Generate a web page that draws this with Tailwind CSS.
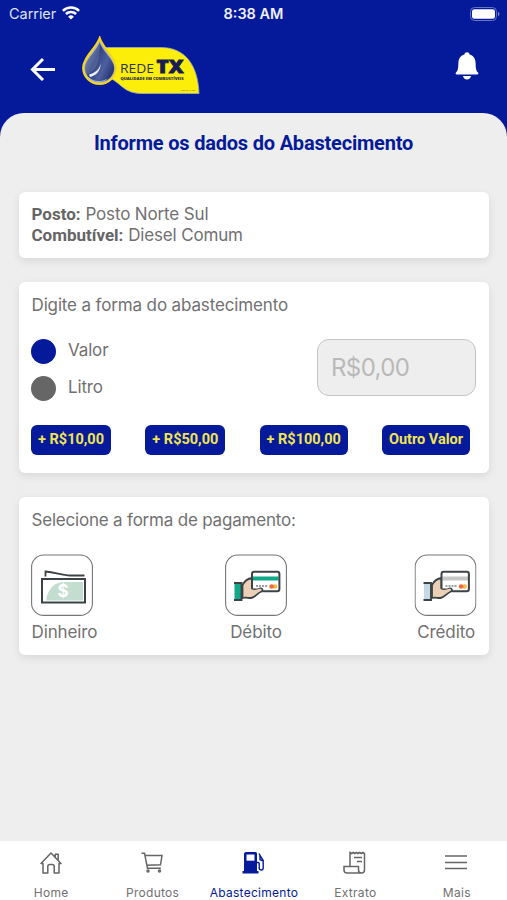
<!DOCTYPE html>
<html lang="pt-BR">
<head>
<meta charset="utf-8">
<meta name="viewport" content="width=device-width, initial-scale=1">
<title>Abastecimento</title>
<script src="https://cdn.jsdelivr.net/npm/@tailwindcss/browser@4"></script>
</head>
<body class="h-[900px] overflow-hidden bg-[#051a9b] font-['Inter',sans-serif] text-[#717171]">
<div class="flex h-[900px] w-[507px] flex-col">
  <header class="h-[113px] shrink-0 text-white">
    <div class="grid h-7 grid-cols-3 items-center pl-[9px] pr-[7px]">
      <div class="flex items-center gap-[6px] text-[14.5px] tracking-[-0.05px] text-[#dfe3f5]"><span>Carrier</span>
        <svg class="h-[14px] w-[18px] -translate-y-px" viewBox="0 0 18 14" fill="none" stroke="#fff" stroke-width="2.5"><path d="M.9 4.9a11.5 11.5 0 0 1 16.2 0M3.9 8a7.2 7.2 0 0 1 10.2 0"/><path d="M9 13.6 6.1 10.700a4.100 4.100 0 0 1 5.800 0Z" fill="#fff" stroke="none"/></svg>
      </div>
      <div class="-ml-[2px] text-center text-[14.5px] font-semibold text-[#eef0fa]">8:38 AM</div>
      <svg class="h-[14px] w-[30px] justify-self-end" viewBox="0 0 30 14"><rect x=".5" y=".5" width="26" height="13" rx="4" fill="none" stroke="#6673c4"/><rect x="2" y="2.200" width="23" height="9.600" rx="2.300" fill="#fff"/><path d="M28 4.800c2 .8 2 3.600 0 4.400Z" fill="#7e8bd0"/></svg>
    </div>
    <div class="flex items-start pl-[30px] pt-2">
      <svg class="mt-[21px] h-[24px] w-[26px]" viewBox="0 0 26 24" fill="none" stroke="#fff" stroke-width="3"><path d="M25 12.500H3M13 2 2.500 12.500 13 23"/></svg>
      <svg class="ml-[25px] h-[60px] w-[120px]" viewBox="0 0 120 60">
        <defs><linearGradient id="drop" x1="0" y1="0" x2="1" y2=".6"><stop offset="0" stop-color="#8c9bc4"/><stop offset=".45" stop-color="#33457f"/><stop offset=".75" stop-color="#4c60a0"/><stop offset="1" stop-color="#2b3a78"/></linearGradient></defs>
        <path d="M18 11.500H80C104 11.500 117 29 118 57.500H61C43 57.500 41 48 29 42Z" fill="#fdee0a" stroke="#9dacbd" stroke-width=".8"/>
        <g transform="translate(1 .5)">
          <path d="M17.700 1.500C14 12 1.200 21 1.200 31.500a16.300 15.800 0 0 0 32.600 0C33.800 21 21 12 17.700 1.500Z" fill="#aab4cc" stroke="#f3d51e" stroke-width="2.200"/>
          <path d="M17.700 6C14.500 15 3 23 3 31.500a14.600 14 0 0 0 29.200 0C32.200 23 20.500 15 17.700 6Z" fill="url(#drop)"/>
          <path d="M17.700 6C14.500 15 3 23 3 31.500c0 3 .6 4.500 1.800 6.500C12 36 18.500 28 17.700 6Z" fill="#8394c0" opacity=".3"/>
          <path d="M18.500 26.500c-.5 6-4.500 9.500-11.500 11.500l1 2.500C14.500 39 19 34 18.500 26.500Z" fill="#edf1f7"/>
          <path d="M6.500 41c4.500 4.500 12 5.500 18 2" fill="none" stroke="#c2cadc" stroke-width=".8"/>
        </g>
        <text x="39" y="37" textLength="34" lengthAdjust="spacingAndGlyphs" font-family="Open Sans, sans-serif" font-size="13" fill="#2e3356">REDE</text>
        <text x="75.500" y="37" textLength="27" lengthAdjust="spacingAndGlyphs" font-family="Open Sans, sans-serif" font-size="18" font-weight="800" fill="#171c52" stroke="#171c52" stroke-width=".8">TX</text>
        <text x="39.500" y="43.800" textLength="63" lengthAdjust="spacingAndGlyphs" font-family="Open Sans, sans-serif" font-size="3.200" font-weight="800" fill="#292c4c">QUALIDADE EM COMBUSTÍVEIS</text>
        <text x="100" y="55" textLength="14" font-family="Open Sans, sans-serif" font-size="2.200" fill="#44403c">Posto &amp; BR</text>
      </svg>
      <svg class="ml-auto mr-[28px] mt-[16px] h-[28px] w-[24px]" viewBox="0 0 25 28" preserveAspectRatio="none" fill="#fff"><path d="M12.500.3c1.500 0 2.500.9 2.700 2.200 4.400 1.100 6.300 4.600 6.300 9 0 5.400.8 7.500 2.500 9 .8.800.3 1.900-.8 1.900H1.800c-1.100 0-1.600-1.100-.8-1.900 1.700-1.500 2.500-3.600 2.500-9 0-4.400 1.900-7.900 6.300-9C10 1.200 11 .3 12.500.3Z"/><path d="M8.200 24h8.600c-.5 2-2 3.400-4.300 3.400S8.700 26 8.200 24Z"/></svg>
    </div>
  </header>

  <main class="flex flex-1 flex-col rounded-t-[24px] bg-[#eee] px-[19px]">
    <h1 class="mt-[18px] h-6 whitespace-nowrap text-center font-['Roboto',sans-serif] text-[20px] font-bold leading-6 tracking-[-0.2px] text-[#051a9b]">Informe os dados do Abastecimento</h1>
    <section class="mt-[37px] h-[66px] w-[470px] rounded-[6px] bg-white px-[12.5px] pt-3 text-[17px] leading-[21px] shadow-[0_3px_8px_#00000018]">
      <p><b class="font-['Roboto',sans-serif] font-bold text-[#656565]">Posto:</b> <span class="tracking-[-0.14px]">Posto Norte Sul</span></p>
      <p><b class="font-['Roboto',sans-serif] font-bold text-[#656565]">Combutível:</b> <span class="tracking-[-0.16px]">Diesel Comum</span></p>
    </section>
    <section class="mt-6 h-[191px] w-[470px] rounded-[6px] bg-white px-3 pt-[13px] shadow-[0_3px_8px_#00000018]">
      <h2 class="pl-[0.5px] text-[17px] leading-[21px] tracking-[-0.14px]">Digite a forma do abastecimento</h2>
      <div class="mt-[23px] flex h-[62px] items-start justify-between">
        <div class="flex flex-col gap-3 text-[17px] leading-[23px] tracking-[-0.14px]">
          <div class="flex h-[25px] gap-3"><i class="size-[25px] rounded-full bg-[#051a9b]"></i><span>Valor</span></div>
          <div class="flex h-[25px] gap-3"><i class="size-[25px] rounded-full bg-[#666]"></i><span>Litro</span></div>
        </div>
        <div class="mr-px flex h-[57px] w-[159px] items-center rounded-[12px] border border-[#c4c4c4] bg-[#eee] pl-[13px] text-[24px] tracking-[-0.6px] text-[#b9b9b9]">R$0,00</div>
      </div>
      <div class="mr-[7px] mt-6 flex justify-between font-['Roboto',sans-serif] text-[14.500px] font-bold text-[#f1e453]">
        <button class="h-[30px] w-[80px] whitespace-nowrap rounded-[6px] bg-[#051a9b]">+ R$10,00</button>
        <button class="h-[30px] w-[80px] whitespace-nowrap rounded-[6px] bg-[#051a9b]">+ R$50,00</button>
        <button class="h-[30px] w-[88px] whitespace-nowrap rounded-[6px] bg-[#051a9b]">+ R$100,00</button>
        <button class="h-[30px] w-[88px] whitespace-nowrap rounded-[6px] bg-[#051a9b]">Outro Valor</button>
      </div>
    </section>
    <section class="mt-6 h-[158px] w-[470px] rounded-[6px] bg-white px-3 pt-[13px] shadow-[0_3px_8px_#00000018]">
      <h2 class="pl-[0.5px] text-[17px] leading-[21px] tracking-[-0.2px]">Selecione a forma de pagamento:</h2>
      <div class="mr-px mt-[23px] flex justify-between text-[17px] leading-[21px] tracking-[-0.12px]">
        <div class="flex w-[66px] flex-col items-start gap-[6px]">
          <svg class="size-[62px]" viewBox="0 0 62 62"><rect x=".6" y="1" width="60.800" height="60.400" rx="12" fill="#fff" stroke="#777" stroke-width="1.100"/>
            <path d="M14.500 22.500V17.500C25 18.500 31 21.500 39 21.500H53.500" fill="none" stroke="#3c4347" stroke-width="1.800"/><rect x="11" y="25" width="43" height="23.500" fill="#fff" stroke="#3c4347" stroke-width="2"/><path d="M15.500 46.500V43C18 37 20 30 31 28H52V46.500Z" fill="#c4ddd1"/>
            <text x="32" y="43.300" text-anchor="middle" font-family="Inter, sans-serif" font-size="17" font-weight="700" fill="#fff">$</text></svg>
          <span class="ml-[0.5px]">Dinheiro</span>
        </div>
        <div class="flex flex-col items-center gap-[6px]">
          <svg class="size-[62px]" viewBox="0 0 62 62"><rect x=".6" y="1" width="60.800" height="60.400" rx="12" fill="#fff" stroke="#777" stroke-width="1.100"/>
            <path d="M9.500 30h6.500v15H9.500Z" fill="#10a888"/><path d="M9 29h7.500v17H9" fill="none" stroke="#3c4347" stroke-width="1.900"/>
            <path d="M17.500 31C20 26 22.500 24.500 27 24V34.500c2 1 6 0 8-.8 2.500 0 3.500 2.500 1.500 3.800-4 1.500-6.500 6-10.500 6.500-3 .2-5-1-8.500 0Z" fill="#ecd0b5" stroke="#3c4347" stroke-width="1.800" stroke-linejoin="round"/>
            <path d="M27 34V18H54.500V37H38.500c.6-2.500-1.500-4-4-3.300-2 1-4.500 1.300-7.500.3Z" fill="#fff"/><path d="M28 22.500h25.500v4H28Z" fill="#10a888"/><path d="M27 34.500V20q0-2.200 2.200-2.200h23q2.200 0 2.200 2.200v15q0 2.200-2.200 2.200H37.500" fill="none" stroke="#3c4347" stroke-width="2"/>
            <path d="M31 32h11" stroke="#3c4347" stroke-width="1.200" stroke-dasharray="2 1"/><circle cx="50" cy="32.500" r="2.300" fill="#f8b93c"/><circle cx="46.600" cy="32.500" r="2.300" fill="#ef6a3c"/></svg>
          <span>Débito</span>
        </div>
        <div class="flex w-[61px] flex-col items-end gap-[6px]">
          <svg class="h-[62px] w-[62px] translate-x-[0.5px]" viewBox="0 0 62 62"><rect x=".6" y="1" width="60.800" height="60.400" rx="12" fill="#fff" stroke="#777" stroke-width="1.100"/>
            <path d="M9.500 30h6.500v15H9.500Z" fill="#c5d9e5"/><path d="M9 29h7.500v17H9" fill="none" stroke="#3c4347" stroke-width="1.900"/>
            <path d="M17.500 31C20 26 22.500 24.500 27 24V34.500c2 1 6 0 8-.8 2.500 0 3.500 2.500 1.500 3.800-4 1.500-6.500 6-10.500 6.500-3 .2-5-1-8.500 0Z" fill="#ecd0b5" stroke="#3c4347" stroke-width="1.800" stroke-linejoin="round"/>
            <path d="M27 34V18H54.500V37H38.500c.6-2.500-1.500-4-4-3.300-2 1-4.500 1.300-7.500.3Z" fill="#fff"/><path d="M28 22.500h25.500v4H28Z" fill="#c6c6c6"/><path d="M27 34.500V20q0-2.200 2.200-2.200h23q2.200 0 2.200 2.200v15q0 2.200-2.200 2.200H37.500" fill="none" stroke="#3c4347" stroke-width="2"/>
            <path d="M31 32h11" stroke="#3c4347" stroke-width="1.200" stroke-dasharray="2 1"/><circle cx="50" cy="32.500" r="2.300" fill="#f8b93c"/><circle cx="46.600" cy="32.500" r="2.300" fill="#ef6a3c"/></svg>
          <span class="mr-[1px]">Crédito</span>
        </div>
      </div>
    </section>
  </main>

  <nav class="grid h-[59px] shrink-0 grid-cols-5 bg-white pt-[9px] text-center text-[12px] leading-[16px] tracking-[0.28px]">
    <a class="flex flex-col items-center gap-[10px]"><svg class="h-[25px] w-[24px]" viewBox="0 0 24 25" fill="none" stroke="#666" stroke-width="1.500" stroke-linejoin="round"><path d="m2 13.500 10-10.500 10 10.500h-2v9.500h-4.800v-6.500q0-2-2-2h-2.400q-2 0-2 2V23H4v-9.500ZM16.200 7V4.300h3v5.700"/></svg><span class="pl-px">Home</span></a>
    <a class="flex flex-col items-center gap-[10px]"><svg class="h-[25px] w-[24px]" viewBox="0 0 24 25" fill="none" stroke="#666" stroke-width="1.500"><path d="M1.500 3.200h3L7.500 18.200h13.300M5 5.500h17L20.500 14.800 6.800 15.200"/><circle cx="8" cy="21" r="1"/><circle cx="19.500" cy="21" r="1"/></svg><span class="pl-px">Produtos</span></a>
    <a class="flex flex-col items-center gap-[10px] text-[#051a9b]"><svg class="h-[25px] w-[24px]" viewBox="0 0 24 25"><path d="M5 2h9.500Q16 2 16 3.500V21h1.500v2.500h-16V21H3V3.500Q3.500 2 5 2Z" fill="#051a9b"/><path d="M5.500 4.500h8v6.200h-8Z" fill="#fff"/><path d="M16 12.500h1.200q1 0 1 1V18q0 2 2 2t2-2v-7.500L19 5.500l-1-2M19 5.500v4.200l3 1.200" fill="none" stroke="#051a9b" stroke-width="1.400"/></svg><span class="pl-px">Abastecimento</span></a>
    <a class="flex flex-col items-center gap-[10px]"><svg class="h-[25px] w-[24px]" viewBox="0 0 24 25" fill="none" stroke="#666" stroke-width="1.500"><path d="M7 16V2.500l1.600 1 1.600-1 1.600 1 1.600-1 1.600 1 1.600-1 1.600 1 1.600-1 1.700 1V20q0 3-3 3H4q-3 0-3-3v-3.500h14.500V20q0 3 3 3M11 7.500h8m-5 4h5"/></svg><span class="pl-px">Extrato</span></a>
    <a class="flex flex-col items-center gap-[10px]"><svg class="h-[25px] w-[24px]" viewBox="0 0 24 25" fill="none" stroke="#666" stroke-width="1.700"><path d="M1 6h22M1 12.500h22M1 18.500h22"/></svg><span class="pl-px">Mais</span></a>
  </nav>
</div>
</body>
</html>
